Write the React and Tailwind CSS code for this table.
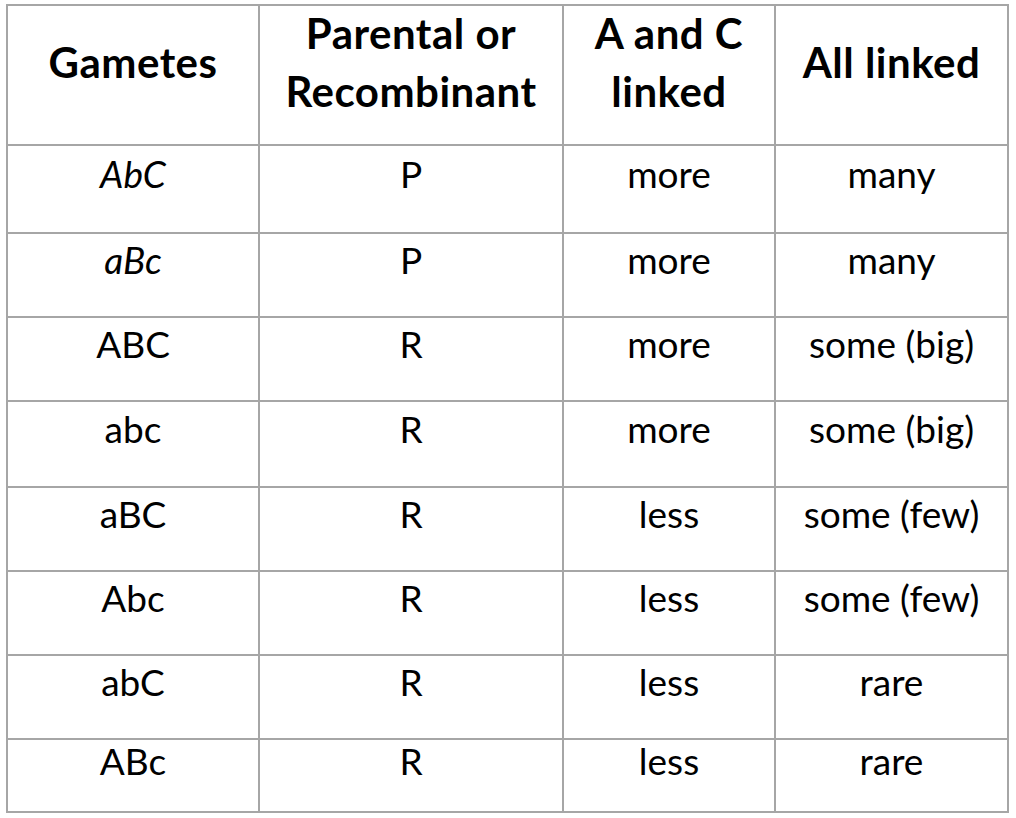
import React from 'react';

const rows = [
  { g: 'AbC', italic: true, pr: 'P', ac: 'more', all: 'many', h: 'h-[86px]' },
  { g: 'aBc', italic: true, pr: 'P', ac: 'more', all: 'many', h: 'h-[82px]' },
  { g: 'ABC', pr: 'R', ac: 'more', all: 'some (big)', h: 'h-[82px]' },
  { g: 'abc', pr: 'R', ac: 'more', all: 'some (big)', h: 'h-[84px]' },
  { g: 'aBC', pr: 'R', ac: 'less', all: 'some (few)', h: 'h-[82px]' },
  { g: 'Abc', pr: 'R', ac: 'less', all: 'some (few)', h: 'h-[82px]' },
  { g: 'abC', pr: 'R', ac: 'less', all: 'rare', h: 'h-[82px]' },
  { g: 'ABc', pr: 'R', ac: 'less', all: 'rare', h: 'h-[71px]' },
];

const HeadCell = ({ children }) => (
  <div className="bg-white h-[138px] flex items-center justify-center pb-[27px] text-center font-bold text-[42px] leading-[58px] tracking-[0.5px]">
    <div>{children}</div>
  </div>
);

const Cell = ({ h, italic, children }) => (
  <div className={`bg-white ${h} flex items-center justify-center pb-[30px] text-[37px] leading-[42px] ${italic ? 'italic' : ''}`}>
    {children}
  </div>
);

export default function App() {
  return (
    <div className="min-h-screen bg-white pt-[4px] pl-[6px] text-black" style={{ fontFamily: 'Lato, "Open Sans", sans-serif' }}>
      <div className="inline-grid grid-cols-[250px_302px_210px_231px] gap-[2px] p-[2px] bg-[#a6a6a6]">
        <HeadCell>Gametes</HeadCell>
        <HeadCell>Parental or<br />Recombinant</HeadCell>
        <HeadCell>A and C<br />linked</HeadCell>
        <HeadCell>All linked</HeadCell>
        {rows.map(r => (
          <React.Fragment key={r.g}>
            <Cell h={r.h} italic={r.italic}>{r.g}</Cell>
            <Cell h={r.h}>{r.pr}</Cell>
            <Cell h={r.h}>{r.ac}</Cell>
            <Cell h={r.h}>{r.all}</Cell>
          </React.Fragment>
        ))}
      </div>
    </div>
  );
}
